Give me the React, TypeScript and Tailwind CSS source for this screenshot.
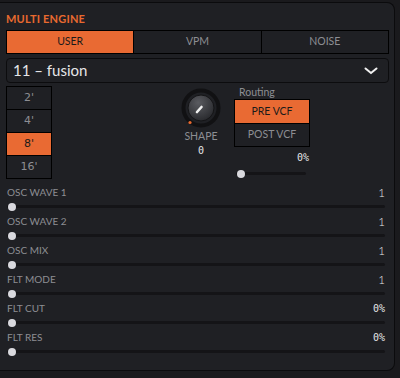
import React from 'react';

const sans = { fontFamily: 'Lato, "Open Sans", sans-serif' };
const mono = { fontFamily: '"DejaVu Sans Mono", monospace' };

const sliders: { label: string; value: string }[] = [
	{ label: 'OSC WAVE 1', value: '1' },
	{ label: 'OSC WAVE 2', value: '1' },
	{ label: 'OSC MIX', value: '1' },
	{ label: 'FLT MODE', value: '1' },
	{ label: 'FLT CUT', value: '0%' },
	{ label: 'FLT RES', value: '0%' },
];

const SliderTrack: React.FunctionComponent<{ className?: string }> = ({ className }) => (
	<div className={`relative h-[3px] rounded-full bg-[#141417] ${className ?? ''}`}>
		<div className="absolute left-[1px] top-[-2.5px] h-[8px] w-[8px] rounded-full bg-[#d9d9de]" />
	</div>
);

const Knob: React.FunctionComponent = () => (
	<svg width="40" height="40" viewBox="0 0 40 40">
		<defs>
			<radialGradient id="kb" cx="40%" cy="30%" r="70%">
				<stop offset="0%" stopColor="#5a5b60" />
				<stop offset="100%" stopColor="#2a2b2f" />
			</radialGradient>
		</defs>
		<circle cx="20" cy="20" r="17.5" fill="none" stroke="#111113" strokeWidth="4" />
		<circle cx="20" cy="20" r="13" fill="url(#kb)" stroke="#141416" strokeWidth="1" />
		<line x1="16" y1="24" x2="20.5" y2="19" stroke="#f0f0f0" strokeWidth="2.6" strokeLinecap="round" />
		<circle cx="9" cy="34.5" r="1.6" fill="#e8692f" />
	</svg>
);

export default function App() {
	return (
		<div className="h-[378px] w-[400px] overflow-hidden bg-[#1a1a1d] pt-[2px]" style={sans}>
			<div className="h-[369px] w-[395px] rounded-r-[8px] border border-l-0 border-[#0b0b0d] bg-[#1f2024] pl-[6px] pr-[5px]">
				<div className="pt-[8px] text-[11px] font-bold leading-[16px] tracking-[0.2px] text-[#e8692f]">MULTI ENGINE</div>
				<div className="mt-[3px] flex h-[24px] border border-black text-[10.5px]">
					<div className="flex flex-1 items-center justify-center bg-[#e96a33] text-[#1a1a1a]">USER</div>
					<div className="flex flex-1 items-center justify-center border-l border-black bg-[#1f2024] text-[#8d8e93]">VPM</div>
					<div className="flex flex-1 items-center justify-center border-l border-black bg-[#1f2024] text-[#8d8e93]">NOISE</div>
				</div>
				<div className="mt-[4px] flex h-[25px] items-center justify-between rounded-[4px] border border-[#0c0c0e] pl-[6px] pr-[10px]">
					<span className="text-[15px] leading-none text-[#e6e6e8]">11 – fusion</span>
					<svg width="14" height="8" viewBox="0 0 14 8">
						<path d="M1.5 1.5 L7 6 L12.5 1.5" fill="none" stroke="#f0f0f0" strokeWidth="2" strokeLinecap="round" />
					</svg>
				</div>
				<div className="mt-[3px] flex">
					<div className="flex w-[46px] flex-col border border-black text-[11px]" style={{ fontFamily: '"DejaVu Sans", sans-serif' }}>
						<div className="flex h-[22px] items-center justify-center text-[#8d8e93]">2'</div>
						<div className="flex h-[23px] items-center justify-center border-t border-black text-[#8d8e93]">4'</div>
						<div className="flex h-[23px] items-center justify-center border-t border-black bg-[#e96a33] text-[#1a1a1a]">8'</div>
						<div className="flex h-[23px] items-center justify-center border-t border-black text-[#8d8e93]">16'</div>
					</div>
					<div className="ml-[128px] flex w-[42px] flex-col items-center pt-[2px]">
						<Knob />
						<div className="mt-[3px] text-[10.5px] leading-none text-[#8d8e93]">SHAPE</div>
						<div className="mt-[4px] text-[10px] leading-none text-[#e6e6e8]" style={mono}>0</div>
					</div>
					<div className="ml-[12px] flex w-[76px] flex-col">
						<div className="pl-[5px] text-[10.5px] leading-[13px] text-[#8d8e93]">Routing</div>
						<div className="flex flex-col border border-black text-[10.5px]">
							<div className="flex h-[23px] items-center justify-center bg-[#e96a33] text-[#1a1a1a]">PRE VCF</div>
							<div className="flex h-[23px] items-center justify-center border-t border-black text-[#8d8e93]">POST VCF</div>
						</div>
						<div className="mt-[6px] pr-[1px] text-right text-[10px] leading-none text-[#e6e6e8]" style={mono}>0%</div>
						<SliderTrack className="ml-[2px] mr-[4px] mt-[9px]" />
					</div>
				</div>
				<div className="mt-[7px] flex flex-col pl-[1px] pr-[4px]">
					{sliders.map(s => (
						<div key={s.label} className="h-[29px]">
							<div className="flex items-center justify-between text-[10px] leading-[13px]">
								<span className="text-[#8d8e93]">{s.label}</span>
								{s.value.endsWith('%') ? (
									<span className="text-[10px] text-[#e6e6e8]" style={mono}>{s.value}</span>
								) : (
									<span className="text-[11.5px] font-light text-[#e6e6e8]">{s.value}</span>
								)}
							</div>
							<SliderTrack className="mt-[6px]" />
						</div>
					))}
				</div>
			</div>
		</div>
	);
}
